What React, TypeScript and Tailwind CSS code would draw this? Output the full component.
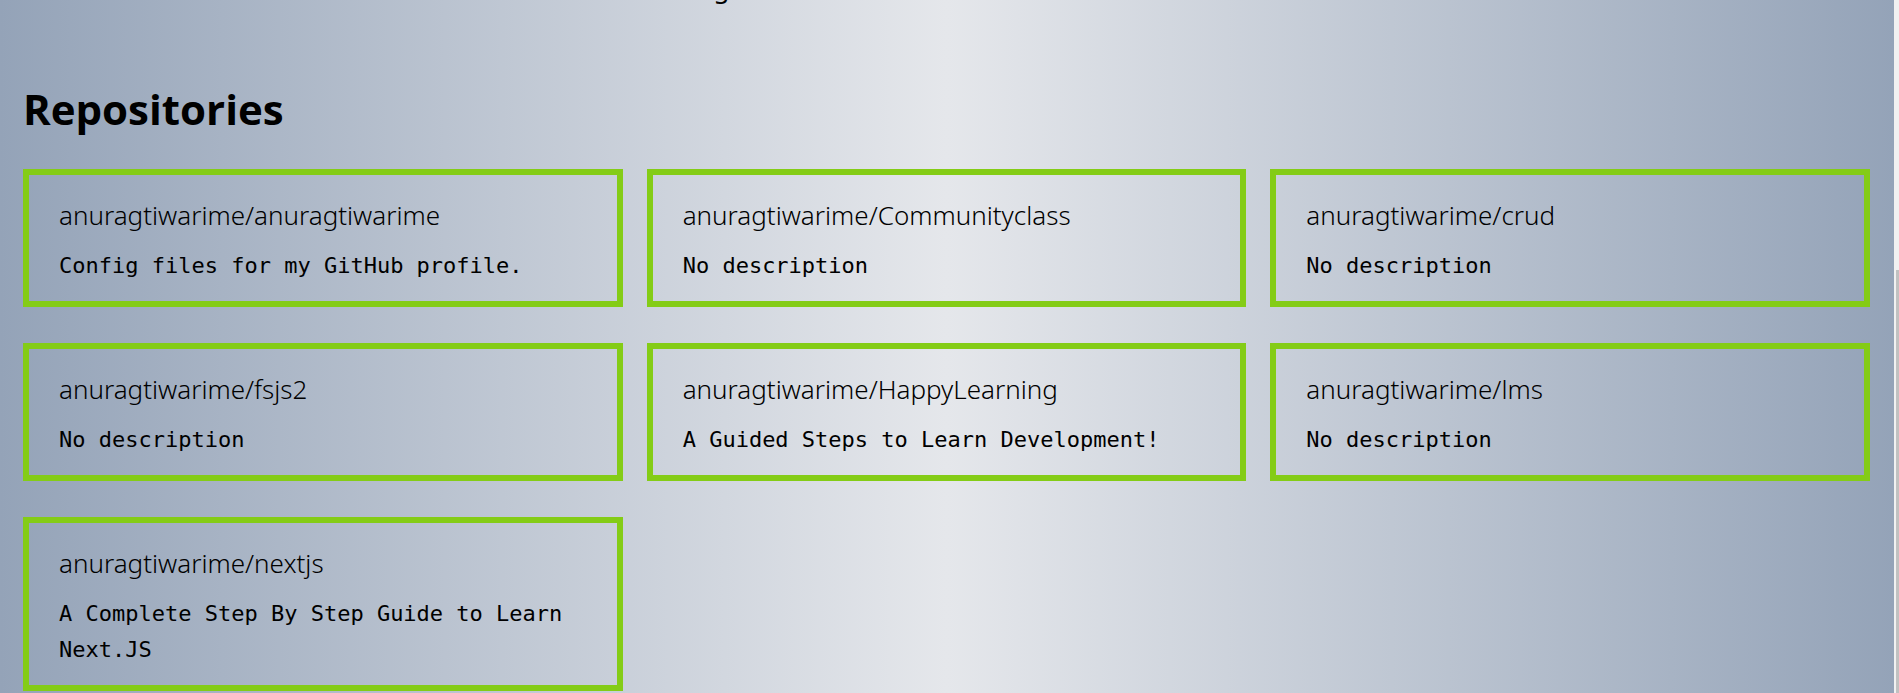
type Repo = { name: string; description: string | null };

const repos: Repo[] = [
  { name: "anuragtiwarime/anuragtiwarime", description: "Config files for my GitHub profile." },
  { name: "anuragtiwarime/Communityclass", description: null },
  { name: "anuragtiwarime/crud", description: null },
  { name: "anuragtiwarime/fsjs2", description: null },
  { name: "anuragtiwarime/HappyLearning", description: "A Guided Steps to Learn Development!" },
  { name: "anuragtiwarime/lms", description: null },
  { name: "anuragtiwarime/nextjs", description: "A Complete Step By Step Guide to Learn Next.JS" },
];

function RepoCard({ repo }: { repo: Repo }) {
  return (
    <article className="border-6 border-[#84cc16] px-[30px] pt-[19px] pb-[17px]">
      <h2 className="mb-3 font-['Noto_Sans',sans-serif] text-[26px] leading-[42px] font-[350]">{repo.name}</h2>
      <p className="font-['DejaVu_Sans_Mono',monospace] text-[22px] leading-9">
        {repo.description ?? "No description"}
      </p>
    </article>
  );
}

export default function App() {
  return (
    <div className="flex h-screen overflow-hidden text-black">
      <main className="flex-1 bg-linear-to-r/srgb from-[#94a3b8] via-[#e5e7eb] to-[#94a3b8] pr-6 pl-[23px]">
        <div className="flex h-[82px] justify-center overflow-hidden">
          <p className="-mt-[30px] mr-[450px] font-['Noto_Sans',sans-serif] text-[26px] leading-9">g</p>
        </div>
        <h1 className="mb-[33px] font-['Open_Sans',sans-serif] text-[42px] leading-[54px] font-bold">Repositories</h1>
        <section className="grid grid-cols-3 items-start gap-x-6 gap-y-9">
          {repos.map((repo) => (
            <RepoCard key={repo.name} repo={repo} />
          ))}
        </section>
      </main>
      <div className="flex w-[5px] flex-col bg-[#f1f1f1] pt-[270px] pl-[2px]">
        <div className="flex-1 bg-[#c1c1c1]" />
      </div>
    </div>
  );
}
